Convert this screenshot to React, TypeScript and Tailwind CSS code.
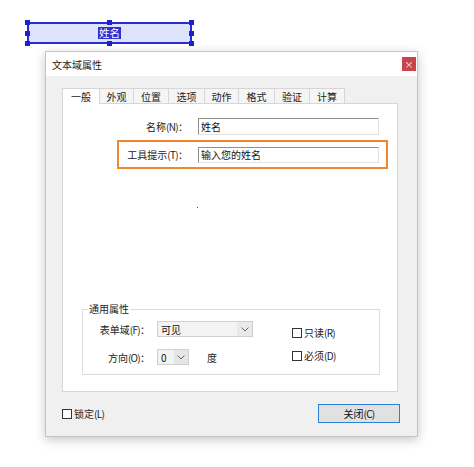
import React from "react";

const font = { fontFamily: '"Noto Sans CJK SC", "Microsoft YaHei", sans-serif' };

function Chevron() {
  return (
    <svg width="8" height="5" viewBox="0 0 8 5" className="block">
      <path d="M0.5 0.5 L4 4 L7.5 0.5" fill="none" stroke="#666" strokeWidth="1" />
    </svg>
  );
}

function Handle({ className }: { className: string }) {
  return <div className={`absolute w-[5px] h-[5px] bg-[#1f1fd2] ${className}`} />;
}

// label text with a compact mnemonic key, e.g. 名称(N)：
function Label({ text, k }: { text: string; k: string }) {
  return (
    <>
      {text}
      <span className="tracking-[-0.7px]">({k})</span>：
    </>
  );
}

function CheckBox({ text, k }: { text: string; k: string }) {
  return (
    <div className="flex items-center gap-[2px] text-[10px] leading-[12px] text-[#222]">
      <div className="w-[10px] h-[10px] border border-[#333] bg-white" />
      <span>
        {text}
        <span className="tracking-[-0.7px]">({k})</span>
      </span>
    </div>
  );
}

function Sunken({ text, h }: { text: string; h: string }) {
  return (
    <div
      className={`w-[181px] ${h} bg-white border-t border-l border-t-[#8f8f8f] border-l-[#8f8f8f] border-r border-b border-r-[#e2e2e2] border-b-[#e2e2e2] flex items-center pl-[2px] text-[10px] text-[#111]`}
    >
      {text}
    </div>
  );
}

const tabs: [string, string][] = [
  ["一般", "w-[38px]"],
  ["外观", "w-[35px]"],
  ["位置", "w-[36px]"],
  ["选项", "w-[37px]"],
  ["动作", "w-[35px]"],
  ["格式", "w-[37px]"],
  ["验证", "w-[36px]"],
  ["计算", "w-[36px]"],
];

export default function App() {
  return (
    <div className="w-[474px] h-[467px] bg-white flex flex-col overflow-hidden" style={font}>
      {/* form field being edited */}
      <div className="relative ml-[27px] mt-[22px] w-[165px] h-[22px] border-2 border-[#2a2ad6] bg-[#dde3fb] flex items-center justify-center">
        <span className="bg-[#2f2fd0] text-white text-[10.5px] leading-[12px] px-[1px]">姓名</span>
        <Handle className="-left-[4px] -top-[4px]" />
        <Handle className="left-[78px] -top-[4px]" />
        <Handle className="-right-[4px] -top-[4px]" />
        <Handle className="-left-[4px] top-[7px]" />
        <Handle className="-right-[4px] top-[7px]" />
        <Handle className="-left-[4px] -bottom-[4px]" />
        <Handle className="left-[78px] -bottom-[4px]" />
        <Handle className="-right-[4px] -bottom-[4px]" />
      </div>

      {/* properties dialog */}
      <div className="ml-[45px] mt-[7px] w-[373px] h-[386px] border border-[#c4c4c4] bg-[#f0f0f0] shadow-[0_3px_10px_rgba(0,0,0,0.22)] flex flex-col">
        <div className="h-[24px] bg-white flex items-center justify-between pl-[6px] pr-[1px]">
          <span className="text-[10px] text-[#222]">文本域属性</span>
          <div className="w-[14px] h-[14px] bg-[#c9434b] flex items-center justify-center text-white text-[9px] leading-none">
            ×
          </div>
        </div>

        <div className="flex flex-col pl-[16px] pt-[12px]">
          <div className="flex h-[15px] items-end">
            {tabs.map(([t, w], i) => (
              <div
                key={t}
                className={`${w} ${i === 0 ? "h-[16px] bg-white relative z-10 -mb-px" : "h-[15px] bg-[#f5f5f5]"} ${i > 0 ? "-ml-px" : ""} border border-b-0 border-[#d6d6d6] flex items-center justify-center text-[10px] text-[#222]`}
              >
                {t}
              </div>
            ))}
          </div>

          <div className="w-[336px] h-[289px] bg-white border border-[#d6d6d6] flex flex-col">
            <div className="mt-[14px] flex items-center">
              <div className="w-[125px] text-right text-[10px] text-[#222]">
                <Label text="名称" k="N" />
              </div>
              <div className="ml-[10px]">
                <Sunken text="姓名" h="h-[17px]" />
              </div>
            </div>

            <div className="mt-[5px] ml-[54px] w-[271px] h-[29px] border-2 border-[#f0872f] flex items-center">
              <div className="w-[69px] text-right text-[10px] text-[#222]">
                <Label text="工具提示" k="T" />
              </div>
              <div className="ml-[10px]">
                <Sunken text="输入您的姓名" h="h-[16px]" />
              </div>
            </div>

            <div className="mt-[38px] ml-[134px] w-[1px] h-[1px] bg-[#555]" />

            <fieldset className="mt-[94px] ml-[19px] w-[298px] h-[73px] border border-[#dcdcdc]">
              <legend className="ml-[5px] px-[1px] text-[10px] leading-[14px] text-[#222]">通用属性</legend>
              <div className="flex">
                <div className="w-[209px] flex flex-col gap-[12px] pt-[5px]">
                  <div className="flex items-center">
                    <div className="w-[67px] text-right text-[10px] text-[#222]">
                      <Label text="表单域" k="F" />
                    </div>
                    <div className="ml-[7px] w-[96px] h-[16px] border border-[#cfcfcf] bg-[#f3f3f3] flex">
                      <div className="flex-1 flex items-center pl-[3px] text-[10px] text-[#111]">可见</div>
                      <div className="w-[15px] flex items-center justify-center bg-[#e9e9e9]">
                        <Chevron />
                      </div>
                    </div>
                  </div>
                  <div className="flex items-center">
                    <div className="w-[67px] text-right text-[10px] text-[#222]">
                      <Label text="方向" k="O" />
                    </div>
                    <div className="ml-[7px] w-[32px] h-[16px] border border-[#cfcfcf] bg-[#f3f3f3] flex">
                      <div className="flex-1 flex items-center pl-[3px] text-[10px] text-[#111]">0</div>
                      <div className="w-[14px] flex items-center justify-center bg-[#e6e6e6]">
                        <Chevron />
                      </div>
                    </div>
                    <span className="ml-[18px] text-[10px] text-[#222]">度</span>
                  </div>
                </div>
                <div className="flex flex-col gap-[11px] pt-[11px]">
                  <CheckBox text="只读" k="R" />
                  <CheckBox text="必须" k="D" />
                </div>
              </div>
            </fieldset>
          </div>

          <div className="w-[338px] mt-[12px] flex items-center justify-between">
            <CheckBox text="锁定" k="L" />
            <div className="w-[82px] h-[19px] border border-[#2d7fd6] bg-[#e1e1e1] flex items-center justify-center text-[10px] text-[#111]">
              关闭<span className="tracking-[-0.7px]">(C)</span>
            </div>
          </div>
        </div>
      </div>
    </div>
  );
}
